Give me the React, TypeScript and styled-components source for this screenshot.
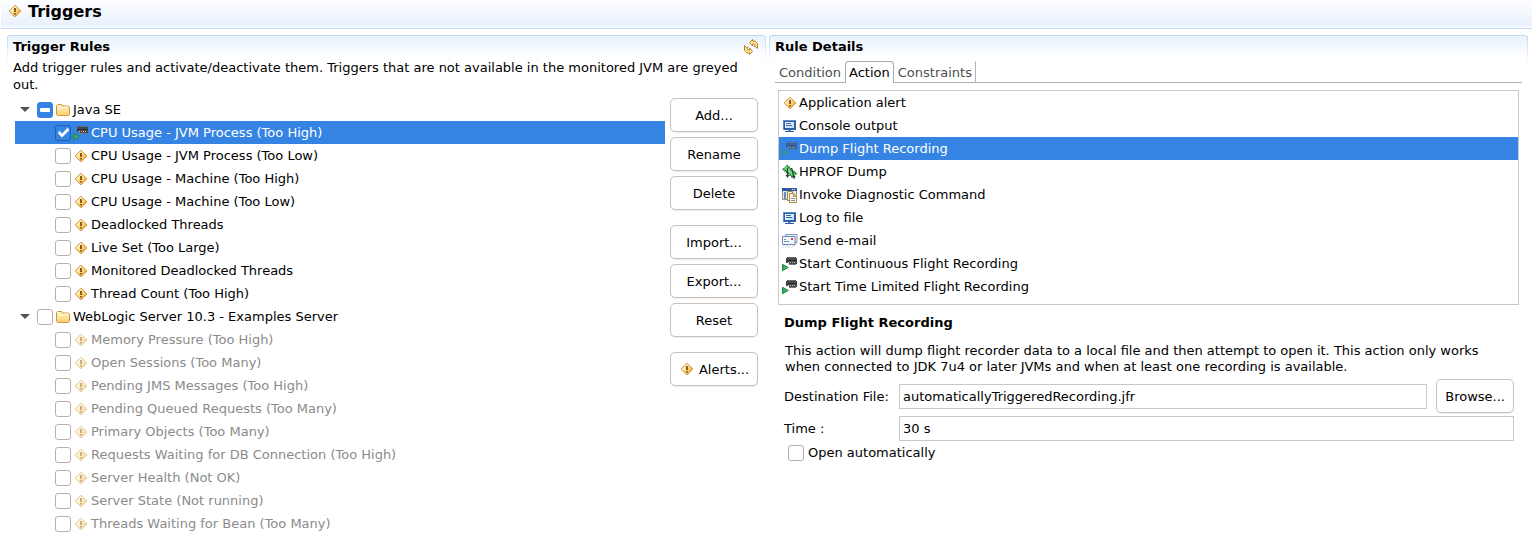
import React, { useEffect, useRef, useState } from "react";
import styled, { createGlobalStyle, css } from "styled-components";

const GlobalStyle = createGlobalStyle`
  *, *::before, *::after { box-sizing: border-box; }
  body {
    margin: 0;
    background: #fff;
    color: #000;
    font: 13px/17px "DejaVu Sans", Verdana, sans-serif;
  }
  h1, h2, h3, p, ul { margin: 0; padding: 0; }
  ul { list-style: none; }
  button, input { font: inherit; color: inherit; margin: 0; }
`;

/* ---------- icons ---------- */

const Svg = styled.svg<{ $faded?: boolean }>`
  display: block;
  flex: none;
  width: 16px;
  height: 16px;
  opacity: ${(p) => (p.$faded ? 0.5 : 1)};
`;

const Defs = styled.svg`
  position: absolute;
  width: 0;
  height: 0;
`;

const IconDefs = () => (
  <Defs aria-hidden="true">
    <defs>
      <linearGradient id="amber" x1="0" y1="0" x2="1" y2="1">
        <stop offset="0.25" stopColor="#fff6c8" />
        <stop offset="0.55" stopColor="#fbd678" />
        <stop offset="0.85" stopColor="#f3a63a" />
      </linearGradient>
      <linearGradient id="folder" x1="0" y1="0" x2="0" y2="1">
        <stop offset="0" stopColor="#fff4c8" />
        <stop offset="1" stopColor="#fccf6c" />
      </linearGradient>
      <linearGradient id="screen" x1="0" y1="0" x2="1" y2="1">
        <stop offset="0" stopColor="#ffffff" />
        <stop offset="1" stopColor="#bcd6f0" />
      </linearGradient>
      <linearGradient id="play" x1="0" y1="0" x2="1" y2="0">
        <stop offset="0" stopColor="#2f9c5c" />
        <stop offset="1" stopColor="#62c488" />
      </linearGradient>
    </defs>
  </Defs>
);

const WarningIcon = ({ faded }: { faded?: boolean }) => (
  <Svg viewBox="0 0 16 16" $faded={faded} aria-hidden="true">
    <path d="M8 2.200 13.800 8 8 13.800 2.200 8Z" fill="url(#amber)" stroke="#d08c34" />
    <path d="M7.100 5h1.800v4H7.100zM7.100 10h1.800v1.500H7.100z" fill="#7a5210" />
  </Svg>
);

const FolderIcon = () => (
  <Svg viewBox="0 0 16 16" aria-hidden="true">
    <path
      d="M1.500 12.500V3.500l1-1h4l1 1.500h5.500l1.500 1v7.500l-1 1h-11z"
      fill="url(#folder)"
      stroke="#cf9440"
    />
    <path d="M3 6h6l1-1h3" fill="none" stroke="#fffbe4" />
  </Svg>
);

const RecorderIcon = ({ faded }: { faded?: boolean }) => (
  <Svg viewBox="0 0 16 16" $faded={faded} aria-hidden="true">
    <path d="M5 1h9v1h1v6h-1v1H7V7H4V2h1z" fill="#47484a" />
    <path d="M6 1.500h7" stroke="#6c6d70" />
    <path d="M4 4.500h11" stroke="#2c2d2f" />
    <path d="M6 6h1v1H6zM8 6h1v1H8zM10 6h1v1h-1zM12 6h1v1h-1z" fill="#c4c5c8" />
    <path d="M7 8.500h7" stroke="#77787b" />
    <path d="M0.500 8.300v6.400l5.800-3.200z" fill="url(#play)" stroke="#1f8a4c" />
  </Svg>
);

const ConsoleIcon = () => (
  <Svg viewBox="0 0 16 16" aria-hidden="true">
    <path d="M1 2h13v10H1z" fill="#2d5fa8" />
    <path d="M1 2.500h13M1.500 2v10" stroke="#5d8fd0" />
    <path d="M3 4h9v6H3z" fill="url(#screen)" />
    <path d="M4 5.500h5M4 7.500h6" stroke="#3565ac" />
    <path d="M6 12h3v1H6z" fill="#7c98c0" />
    <path d="M3 13h9v1H3z" fill="#2b56a0" />
  </Svg>
);

const HprofIcon = () => (
  <Svg viewBox="0 0 16 16" aria-hidden="true">
    <path d="M0.500 5 5 1l9.500 8.500-3 4.500z" fill="#58c468" />
    <path
      d="M1 5l10.500 9M5 1.500l10 9"
      stroke="#14702c"
      strokeWidth="2"
      strokeDasharray="1.200 1"
    />
    <path d="M3 4.500l2-1.500 7 6.500-1.500 2z" fill="#7edc88" />
    <path d="M5.500 4v8M9.500 4l2 8" stroke="#2c4438" strokeWidth="1.200" />
    <path d="M3.500 11h4l-2 3zM9.500 12h4l-1 3z" fill="#2c4438" />
  </Svg>
);

const CommandIcon = () => (
  <Svg viewBox="0 0 16 16" aria-hidden="true">
    <path d="M0.500 2.500h14v10H0.500z" fill="#dce8f6" stroke="#8a8f98" />
    <path d="M0 1h15v3H0z" fill="#2d59a0" />
    <path d="M10 2h1v1h-1zM12 2h1v1h-1z" fill="#fff" />
    <path d="M2 5h2v7H2z" fill="#6f8cb8" />
    <path d="M5.500 4.500h5v9h-5z" fill="#fff6d8" stroke="#a8823c" />
    <path d="M7.500 6.500h4l3 3v6h-7z" fill="#fffaf0" stroke="#b98a34" />
    <path d="M11.500 6.500v3h3" fill="#f7d48a" stroke="#b98a34" />
    <path d="M9 11.500h4M9 13.500h4" stroke="#6f8fc4" />
  </Svg>
);

const MailIcon = () => (
  <Svg viewBox="0 0 16 16" aria-hidden="true">
    <path d="M3.500 1.500h11.500v8H3.500z" fill="#eaf1fa" stroke="#7d9cc6" />
    <path d="M0.500 3.500h12.500v8H0.500z" fill="#f4f8fd" stroke="#6a8aba" />
    <path d="M2 6.500h2M2 8.500h5" stroke="#6f90c4" />
    <path d="M9 5h2v2H9z" fill="#d8384a" />
    <path
      d="M0 15l3-3M3 15l3-3M6 15l3-3M9 15l3-3M12 13l3-3"
      stroke="#c4c8ce"
      strokeWidth="0.800"
    />
  </Svg>
);

const RefreshIcon = () => (
  <Svg viewBox="0 0 16 16" aria-hidden="true">
    <path
      d="M6.500 3.500 9.500 0.500v1.500h2.500l2.500 2.500v5l-2-2h-1.500l1-1-1-1.500H9.500v2z"
      fill="#fde795"
      stroke="#b8802c"
    />
    <path
      d="M9.500 12.500 6.500 15.500V14H4l-2.500-2.500v-5l2 2H5l-1 1 1 1.500h1.500V9z"
      fill="#fde795"
      stroke="#b8802c"
    />
  </Svg>
);

/* ---------- page frame ---------- */

const Header = styled.header`
  display: flex;
  align-items: flex-start;
  gap: 5px;
  height: 29px;
  margin-left: 1px;
  padding: 3px 6px;
  background: linear-gradient(#fefeff, #e8f1fc 26px, #fff 27px);
  border-bottom: 1px solid #bcd6f5;
`;

const PageTitle = styled.h1`
  font-size: 16px;
  line-height: 17px;
`;

const Columns = styled.main`
  display: flex;
  align-items: flex-start;
  gap: 3px;
  padding: 6px 4px 0 7px;
`;

const Panel = styled.section`
  position: relative;
  flex: 1 1 0;
  min-width: 0;
  padding: 2px 6px 0;
  border-top: 1px solid #bcd6f5;
  border-radius: 4px 4px 0 0;
  background: linear-gradient(#e9f2fc, #fff 22px);

  &::before {
    content: "";
    position: absolute;
    inset: 0 0 auto;
    height: 26px;
    border: solid;
    border-width: 0 1px;
    border-image: linear-gradient(#bcd6f5, #fff) 1;
    pointer-events: none;
  }
`;

const PanelBar = styled.div`
  display: flex;
  align-items: center;
  justify-content: space-between;
  height: 17px;
  padding-right: 1px;
`;

const PanelTitle = styled.h2`
  font-size: 13px;
  line-height: 17px;
`;

const IconButton = styled.button`
  padding: 0;
  border: 0;
  background: none;
`;

const Intro = styled.p`
  padding: 4px 20px 5px 0;
`;

/* ---------- shared controls ---------- */

const Check = styled.input.attrs({ type: "checkbox" })`
  appearance: none;
  flex: none;
  width: 16px;
  height: 16px;
  border: 1px solid #b9b0a8;
  border-radius: 3px;
  background: #fff;

  &:checked,
  &:indeterminate {
    border-color: #1b5fb5;
    background: #3584e4;
  }
  &:indeterminate {
    border-color: #3584e4;
  }
  &:checked::after {
    content: "";
    display: block;
    width: 14px;
    height: 14px;
    background: #fff;
    clip-path: polygon(3px 5px, 6px 8px, 12px 2px, 13px 5px, 6px 12px, 2px 8px);
  }
  &:indeterminate::after {
    content: "";
    display: block;
    width: 10px;
    height: 4px;
    margin: 5px 2px;
    border-radius: 1px;
    background: #fff;
  }
`;

const PushButton = styled.button`
  display: flex;
  align-items: center;
  justify-content: center;
  gap: 4px;
  height: 34px;
  padding: 0 8px;
  border: 1px solid #c9c2bc;
  border-radius: 5px;
  background: #fff;
  box-shadow: 0 1px 1px #f1efed;
  white-space: nowrap;
`;

/* ---------- rule tree ---------- */

const RulesBody = styled.div`
  display: flex;
  align-items: flex-start;
  gap: 5px;
  padding: 0 2px;
`;

const Tree = styled.ul`
  flex: 1;
  min-width: 0;
`;

const TreeRow = styled.div<{ $child?: boolean; $selected?: boolean; $disabled?: boolean }>`
  display: flex;
  align-items: center;
  height: 23px;
  padding-left: ${(p) => (p.$child ? 40 : 4)}px;
  white-space: nowrap;
  ${(p) => p.$selected && css`background: #3584e4; color: #fff;`}
  ${(p) => p.$disabled && css`color: #8b8b8b;`}
`;

const RowLabel = styled.label`
  display: flex;
  align-items: center;
  gap: 2px;
  padding-left: 2px;
`;

const Expander = styled.button<{ $open: boolean }>`
  width: 18px;
  height: 16px;
  padding: 0 0 0 1px;
  border: 0;
  background: none;

  &::before {
    content: "";
    display: block;
    width: 10px;
    height: 5px;
    background: #505456;
    clip-path: polygon(0 0, 100% 0, 50% 100%);
    transform: ${(p) => (p.$open ? "none" : "rotate(-90deg)")};
  }
`;

const ButtonColumn = styled.div`
  display: flex;
  flex-direction: column;
  gap: 15px;
  width: 88px;
`;

const ButtonGroup = styled.div`
  display: flex;
  flex-direction: column;
  gap: 5px;
`;

/* ---------- rule details ---------- */

const TabBar = styled.div`
  display: flex;
  height: 22px;
  margin-top: 6px;
  border-bottom: 1px solid #b1b1b1;
`;

const Tab = styled.button<{ $active?: boolean; $last?: boolean }>`
  height: 22px;
  padding: 0 3px;
  border: 1px solid transparent;
  border-width: 1px 1px 0 1px;
  background: none;
  color: #494f51;
  ${(p) => p.$last && css`border-right-color: #b1b1b1;`}
  ${(p) =>
    p.$active &&
    css`
      border-color: #a9a9a9;
      border-radius: 4px 4px 0 0;
      background: #fff;
      color: #000;
    `}
`;

const ActionList = styled.ul`
  margin: 7px 3px 0;
  padding-bottom: 6px;
  border: 1px solid #c8c8c8;
`;

const ActionItem = styled.li<{ $selected?: boolean }>`
  display: flex;
  align-items: center;
  gap: 1px;
  height: 23px;
  padding-left: 3px;
  ${(p) => p.$selected && css`background: #3584e4; color: #fff;`}
`;

const Details = styled.div`
  padding: 9px 8px 0 9px;
`;

const DetailsTitle = styled.h3`
  font-size: 13px;
  line-height: 17px;
`;

const DetailsText = styled.p`
  max-width: 720px;
  padding: 12px 0 4px 1px;
  line-height: 16px;
`;

const FormRow = styled.div`
  display: grid;
  grid-template-columns: 106px 1fr auto;
  align-items: center;
  column-gap: 9px;
`;

const FieldLabel = styled.label`
  white-space: nowrap;
`;

const TextField = styled.input<{ $wide?: boolean }>`
  width: 100%;
  min-width: 0;
  height: 25px;
  padding: 0 3px;
  border: 1px solid #c8c8c8;
  background: #fff;
  grid-column: ${(p) => (p.$wide ? "2 / 4" : "2")};
`;

const FormBody = styled.div`
  display: grid;
  gap: 3px;
`;

const CheckRow = styled.label`
  display: flex;
  align-items: center;
  gap: 4px;
  padding-left: 4px;
  width: max-content;
`;

/* ---------- data ---------- */

type Group = { name: string; available: boolean; rules: string[] };

const GROUPS: Group[] = [
  {
    name: "Java SE",
    available: true,
    rules: [
      "CPU Usage - JVM Process (Too High)",
      "CPU Usage - JVM Process (Too Low)",
      "CPU Usage - Machine (Too High)",
      "CPU Usage - Machine (Too Low)",
      "Deadlocked Threads",
      "Live Set (Too Large)",
      "Monitored Deadlocked Threads",
      "Thread Count (Too High)",
    ],
  },
  {
    name: "WebLogic Server 10.3 - Examples Server",
    available: false,
    rules: [
      "Memory Pressure (Too High)",
      "Open Sessions (Too Many)",
      "Pending JMS Messages (Too High)",
      "Pending Queued Requests (Too Many)",
      "Primary Objects (Too Many)",
      "Requests Waiting for DB Connection (Too High)",
      "Server Health (Not OK)",
      "Server State (Not running)",
      "Threads Waiting for Bean (Too Many)",
    ],
  },
];

const SELECTED_RULE = GROUPS[0].rules[0];

const ACTIONS: { name: string; icon: React.ComponentType<{ faded?: boolean }> }[] = [
  { name: "Application alert", icon: WarningIcon },
  { name: "Console output", icon: ConsoleIcon },
  { name: "Dump Flight Recording", icon: RecorderIcon },
  { name: "HPROF Dump", icon: HprofIcon },
  { name: "Invoke Diagnostic Command", icon: CommandIcon },
  { name: "Log to file", icon: ConsoleIcon },
  { name: "Send e-mail", icon: MailIcon },
  { name: "Start Continuous Flight Recording", icon: RecorderIcon },
  { name: "Start Time Limited Flight Recording", icon: RecorderIcon },
];

/* ---------- components ---------- */

function RuleGroup({ group }: { group: Group }) {
  const [open, setOpen] = useState(true);
  const [checked, setChecked] = useState<string[]>(group.rules.filter((r) => r === SELECTED_RULE));
  const groupBox = useRef<HTMLInputElement>(null);
  const all = checked.length === group.rules.length;

  useEffect(() => {
    if (groupBox.current) groupBox.current.indeterminate = checked.length > 0 && !all;
  }, [checked, all]);

  const toggle = (rule: string) =>
    setChecked((c) => (c.includes(rule) ? c.filter((r) => r !== rule) : [...c, rule]));

  const groupId = `group-${group.name.replace(/\W+/g, "-")}`;
  return (
    <li>
      <TreeRow>
        <Expander
          $open={open}
          aria-expanded={open}
          aria-label={group.name}
          onClick={() => setOpen(!open)}
        />
        <Check
          ref={groupBox}
          id={groupId}
          checked={all}
          onChange={() => setChecked(all ? [] : group.rules)}
        />
        <RowLabel htmlFor={groupId}>
          <FolderIcon />
          {group.name}
        </RowLabel>
      </TreeRow>
      {open && (
        <ul>
          {group.rules.map((rule, i) => {
            const id = `${groupId}-${i}`;
            const selected = rule === SELECTED_RULE;
            return (
              <li key={rule}>
                <TreeRow $child $selected={selected} $disabled={!group.available}>
                  <Check id={id} checked={checked.includes(rule)} onChange={() => toggle(rule)} />
                  <RowLabel htmlFor={id}>
                    {selected ? <RecorderIcon /> : <WarningIcon faded={!group.available} />}
                    {rule}
                  </RowLabel>
                </TreeRow>
              </li>
            );
          })}
        </ul>
      )}
    </li>
  );
}

function RulesPanel() {
  return (
    <Panel>
      <PanelBar>
        <PanelTitle>Trigger Rules</PanelTitle>
        <IconButton aria-label="Refresh">
          <RefreshIcon />
        </IconButton>
      </PanelBar>
      <Intro>
        Add trigger rules and activate/deactivate them. Triggers that are not available in the
        monitored JVM are greyed out.
      </Intro>
      <RulesBody>
        <Tree>
          {GROUPS.map((g) => (
            <RuleGroup key={g.name} group={g} />
          ))}
        </Tree>
        <ButtonColumn>
          <ButtonGroup>
            <PushButton>Add...</PushButton>
            <PushButton>Rename</PushButton>
            <PushButton>Delete</PushButton>
          </ButtonGroup>
          <ButtonGroup>
            <PushButton>Import...</PushButton>
            <PushButton>Export...</PushButton>
            <PushButton>Reset</PushButton>
          </ButtonGroup>
          <PushButton>
            <WarningIcon />
            Alerts...
          </PushButton>
        </ButtonColumn>
      </RulesBody>
    </Panel>
  );
}

function DetailsPanel() {
  const [action, setAction] = useState("Dump Flight Recording");
  return (
    <Panel>
      <PanelBar>
        <PanelTitle>Rule Details</PanelTitle>
      </PanelBar>
      <TabBar role="tablist">
        <Tab role="tab">Condition</Tab>
        <Tab role="tab" $active aria-selected="true">
          Action
        </Tab>
        <Tab role="tab" $last>
          Constraints
        </Tab>
      </TabBar>
      <ActionList role="listbox" aria-label="Action">
        {ACTIONS.map(({ name, icon: Icon }) => (
          <ActionItem
            key={name}
            role="option"
            tabIndex={0}
            aria-selected={name === action}
            $selected={name === action}
            onClick={() => setAction(name)}
          >
            <Icon faded={name === action} />
            {name}
          </ActionItem>
        ))}
      </ActionList>
      <Details>
        <DetailsTitle>{action}</DetailsTitle>
        <DetailsText>
          This action will dump flight recorder data to a local file and then attempt to open it.
          This action only works when connected to JDK 7u4 or later JVMs and when at least one
          recording is available.
        </DetailsText>
        <FormBody>
          <FormRow>
            <FieldLabel htmlFor="destination">Destination File:</FieldLabel>
            <TextField id="destination" defaultValue="automaticallyTriggeredRecording.jfr" />
            <PushButton>Browse...</PushButton>
          </FormRow>
          <FormRow>
            <FieldLabel htmlFor="time">Time :</FieldLabel>
            <TextField id="time" $wide defaultValue="30 s" />
          </FormRow>
          <CheckRow>
            <Check />
            Open automatically
          </CheckRow>
        </FormBody>
      </Details>
    </Panel>
  );
}

export default function App() {
  return (
    <>
      <GlobalStyle />
      <IconDefs />
      <Header>
        <WarningIcon />
        <PageTitle>Triggers</PageTitle>
      </Header>
      <Columns>
        <RulesPanel />
        <DetailsPanel />
      </Columns>
    </>
  );
}
